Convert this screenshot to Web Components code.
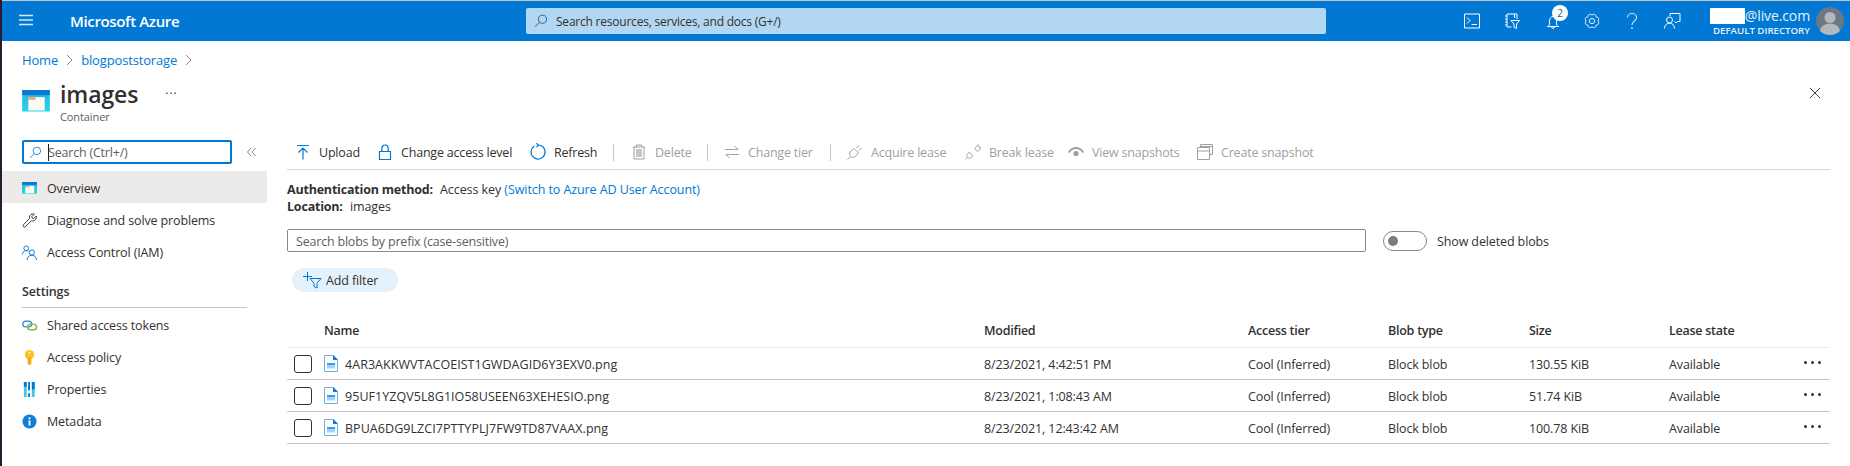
<!DOCTYPE html>
<html>
<head>
<meta charset="utf-8">
<title>images - Microsoft Azure</title>
<style>
  html, body { margin: 0; background: #fff; }
  body { font-family: "Open Sans", "Noto Sans", sans-serif; font-size: 12px; color: #323130; }
</style>
</head>
<body>
<az-portal></az-portal>
<script>
// every icon is drawn on a 16x16 box unless it says otherwise
const ICONS = {
  menu: `<path d="M0 1.5h14M0 6h14M0 10.5h14" stroke="currentColor" stroke-width="1.4" fill="none" opacity=".85"/>`,
  search: `<circle cx="9.7" cy="6" r="4.6" fill="none" stroke="currentColor"/><path d="M6.4 9.4L1.2 14.6" stroke="currentColor" fill="none"/>`,
  terminal: `<path d="M.5 1h15v14H.5z" fill="none" stroke="#fff"/><path d="M3 4.500l3 3-3 3M7.500 11.500h5.500" fill="none" stroke="#fff"/>`,
  directory: `<path d="M3 1h10v5M3 1v13h4.500" fill="none" stroke="#fff"/><path d="M1 3h2M1 6h2M1 9h2M1 12h2M10.500 1v4" fill="none" stroke="#fff" stroke-width="1.200"/><path d="M7 7.500h8.500l-3 3.500v4.500l-2.500-1.200V11z" fill="none" stroke="#fff"/>`,
  bell: `<path d="M3 13.500h12M4.500 13.500c1-1.500 1-3 1-5.500 0-2.500 1.500-4.500 3.500-4.500s3.500 2 3.500 4.500c0 2.500 0 4 1 5.500M7.500 14c0 1.800 3 1.800 3 0" fill="none" stroke="#fff"/>`,
  gear: `<path d="M13.800 8A2.300 2.300 0 0 1 12.100 12.100A2.300 2.300 0 0 1 8 13.800A2.300 2.300 0 0 1 3.900 12.100A2.300 2.300 0 0 1 2.200 8A2.300 2.300 0 0 1 3.900 3.900A2.300 2.300 0 0 1 8 2.200A2.300 2.300 0 0 1 12.100 3.900A2.300 2.300 0 0 1 13.800 8Z" fill="none" stroke="#e4f1fb"/><circle cx="8" cy="8" r="2.600" fill="none" stroke="#e4f1fb"/>`,
  help: `<path d="M3.500 4.500C3.500 2 5.800 .5 8 .5s4.500 1.500 4.500 4c0 3.500-4.500 3.700-4.500 7.500" fill="none" stroke="#d5e9f8" stroke-width="1.100"/><circle cx="8" cy="15" r=".9" fill="#d5e9f8"/>`,
  feedback: `<path d="M6 3V.5h10v8h-2.500L12 10l-1.500-1.500" fill="none" stroke="#fff"/><circle cx="5.500" cy="7" r="3" fill="none" stroke="#fff"/><path d="M.5 15.500c0-3 2-5.300 5-5.300s5 2.300 5 5.300" fill="none" stroke="#fff"/>`,
  close: `<path d="M1 1l12 12M13 1L1 13" stroke="#201f1e" fill="none"/>`,
  upload: `<path d="M2 1.500h12M8 15.500V4M3.500 8.500L8 4l4.500 4.500" fill="none" stroke="#0078d4" stroke-width="1.200"/>`,
  lock: `<path d="M2.500 7.500h11v8h-11zM4.800 7.500V4.500C4.800 2.500 6.200 1 8 1s3.200 1.500 3.200 3.500v3" fill="none" stroke="#0078d4" stroke-width="1.200"/>`,
  refresh: `<path d="M4.500 2A7 7 0 1 0 8 1M6.300 -.8L8.500 1L6.500 3.200" fill="none" stroke="#0078d4" stroke-width="1.200"/>`,
  trash: `<path d="M2 3h12M5.500 3V1h5v2M3 3v12h10V3" fill="none" stroke="#a19f9d"/><path d="M5 5h6v8H5z" fill="#c8c6c4"/>`,
  swap: `<path d="M1 5.500h13M10.500 2L14 5.500M15 10.500H2M5.500 14L2 10.500" fill="none" stroke="#a19f9d"/>`,
  acquire: `<path d="M.5 15.500l3-3" fill="none" stroke="#a19f9d"/><path d="M3.500 12.500c-1.500-1.500-1-4 .5-5.500l3-2.500 4.500 4.500L9 12c-1.500 1.500-4 2-5.500.5zM9.500 4L12 1.500M12 6.500L14.500 4" fill="none" stroke="#a19f9d"/>`,
  breaklease: `<path d="M.5 15.500l2-2" fill="none" stroke="#a19f9d"/><path d="M2.500 13.500c-1-1-.8-2.800.2-3.800l1.800-1.500 3.300 3.300L6.300 13.300c-1 1-2.800 1.200-3.800.2zM9.500 4.500l1.800-1.800c1-.9 2.500-.9 3.300-.1.800.8.800 2.300-.1 3.200L12.500 7.500zM12.500 1.500l1-1M15.500 3.500l-1 .5" fill="none" stroke="#a19f9d"/>`,
  eye: `<path d="M0 8c2-3.500 5-5 8-5s6 1.500 8 5l-1.500 1C13 6.500 10.500 5 8 5S3 6.500 1.500 9z" fill="#a19f9d"/><circle cx="8" cy="9.500" r="2.600" fill="#a19f9d"/>`,
  snapshot: `<path d="M3.500 3.500V.5h12v10h-3M.5 3.500h12v12H.5zM.5 7h12M3.500 2.500h12" fill="none" stroke="#a19f9d"/>`,
  container: `<defs><linearGradient id="c" x1="0" y1="0" x2="0" y2="1"><stop offset="0" stop-color="#1fb3e8"/><stop offset="1" stop-color="#2ad4e8"/></linearGradient></defs><rect width="27" height="21" fill="url(#c)"/><rect width="27" height="5" fill="#0a78d2"/><rect x="6" y="7" width="16" height="13" fill="#fdfaf2"/><rect x="6" y="7" width="7" height="2.500" fill="#f7a35c"/>`,
  wrench: `<path d="M1.500 12.500L8 6c-.6-2.200.6-4.400 3-5 .8-.2 1.500-.1 2.200.1L10.500 3.800l.4 1.700 1.700.4 2.600-2.700c.6 2.500-.8 4.700-3 5.200-.7.200-1.500.1-2.200-.2L3.500 14.800c-1.500 1-3.200-.8-2-2.300z" fill="#fff" stroke="#323130"/>`,
  iam: `<circle cx="4.500" cy="3.500" r="2.500" fill="none" stroke="#0078d4"/><path d="M.5 10c0-2.500 1.500-4 4-4 1 0 1.800.200 2.500.7" fill="none" stroke="#0078d4"/><circle cx="10.500" cy="8" r="2.800" fill="none" stroke="#0078d4"/><path d="M5.500 16c0-3 2-5 5-5s5 2 5 5" fill="none" stroke="#0078d4"/>`,
  tokens: `<rect x=".8" y="3.500" width="9.500" height="6" rx="3" fill="none" stroke="#3f8fdc" stroke-width="1.500"/><rect x="6" y="6.500" width="9.500" height="6" rx="3" fill="none" stroke="#7fba42" stroke-width="1.500"/>`,
  key: `<circle cx="8" cy="5" r="5" fill="#fcc21b"/><circle cx="8" cy="2.800" r="1.100" fill="#fff3c4"/><path d="M6 8h4v6.500L8 16.500l-2-2z" fill="#f6a81c"/>`,
  bars: `<rect x="2" y="0" width="3" height="16" fill="#3ec5e8"/><rect x="2" y="0" width="3" height="5" fill="#0078d4"/><rect x="6.500" y="0" width="2" height="16" fill="#0078d4"/><rect x="6.500" y="9" width="2" height="3" fill="#fff"/><rect x="10.500" y="0" width="3" height="16" fill="#3ec5e8"/><rect x="10.500" y="0" width="3" height="8" fill="#0078d4"/>`,
  info: `<circle cx="8" cy="8" r="7.500" fill="#0f7ed8"/><rect x="7" y="6.800" width="2" height="5.500" fill="#fff"/><circle cx="8" cy="4.600" r="1.200" fill="#fff"/>`,
  addfilter: `<path d="M0 4.500h9M4.500 0v9" fill="none" stroke="#0078d4"/><path d="M6.500 6.500h11l-4 4.800V16l-3-1.500v-3.200z" transform="translate(.5 0)" fill="none" stroke="#0078d4"/>`,
  file: `<path d="M.5 .5h9l4 4v12H.5z" fill="#fff" stroke="#66b3ee"/><path d="M9 0v5h5z" fill="#0f7dd4"/><path d="M3 8h8v2H3z" fill="#3f9be3"/><path d="M3 10h8v3.500H3z" fill="#a9d3f5"/>`
};

class AzIcon extends HTMLElement {
  constructor() {
    super();
    this.attachShadow({ mode: "open" });
  }

  connectedCallback() {
    const width = this.getAttribute("width") || 16;
    const height = this.getAttribute("height") || width;
    const box = this.getAttribute("box") || "0 0 16 16";
    this.shadowRoot.innerHTML = `
      <style>
        :host { display: inline-flex; flex: none; }
        svg { display: block; overflow: visible; }
      </style>
      <svg width="${width}" height="${height}" viewBox="${box}">${ICONS[this.getAttribute("name")] || ""}</svg>
    `;
  }
}
customElements.define("az-icon", AzIcon);

class AzTopbar extends HTMLElement {
  constructor() {
    super();
    this.attachShadow({ mode: "open" });
  }

  connectedCallback() {
    this.shadowRoot.innerHTML = `
      <style>
        :host { display: flex; align-items: center; height: 40px; background: #0078d4; color: #fff; border-top: 1px solid #c4c4c4; }
        :host > * { flex: none; }
        .menu { margin-left: 17px; width: 14px; color: #fff; position: relative; top: -1px; }
        .brand { margin-left: 37px; width: 456px; font-size: 15px; font-weight: 600; letter-spacing: -.35px; white-space: nowrap; }
        .search { width: 800px; height: 26px; box-sizing: border-box; padding-left: 8px; display: flex; align-items: center; gap: 8px; background: #b3d7f2; border-radius: 2px; color: #323130; font-size: 12px; letter-spacing: -.22px; }
        .search az-icon { color: #0b5a99; }
        .icons { margin-left: 126px; display: flex; align-items: center; }
        .slot { width: 40px; display: flex; justify-content: center; position: relative; }
        .badge { position: absolute; left: 20px; top: -8px; width: 16px; height: 16px; border-radius: 50%; background: #fff; color: #0f5fa8; font-size: 10px; line-height: 16px; text-align: center; }
        .account { width: 118px; padding-top: 1px; box-sizing: border-box; line-height: 1; display: flex; flex-direction: column; align-items: flex-end; }
        .mail { display: flex; align-items: center; font-size: 14px; letter-spacing: -.12px; color: #e4f1fb; }
        .mask { width: 35px; height: 16px; background: #fff; }
        .dir { margin-top: 2px; font-size: 9.700px; font-weight: 600; white-space: nowrap; letter-spacing: -.02px; color: #e4f1fb; }
        .avatar { margin-left: 6px; width: 28px; height: 28px; border-radius: 50%; background: #6b7886; overflow: hidden; }
        svg { display: block; }
      </style>
      <az-icon class="menu" name="menu" width="14" height="12" box="0 0 14 12"></az-icon>
      <div class="brand">Microsoft Azure</div>
      <div class="search"><az-icon name="search" width="14"></az-icon><span>Search resources, services, and docs (G+/)</span></div>
      <div class="icons">
        <div class="slot"><az-icon name="terminal"></az-icon></div>
        <div class="slot"><az-icon name="directory"></az-icon></div>
        <div class="slot"><az-icon name="bell"></az-icon><span class="badge">2</span></div>
        <div class="slot"><az-icon name="gear"></az-icon></div>
        <div class="slot"><az-icon name="help"></az-icon></div>
        <div class="slot"><az-icon name="feedback"></az-icon></div>
      </div>
      <div class="account">
        <div class="mail"><span class="mask"></span><span>@live.com</span></div>
        <div class="dir">DEFAULT DIRECTORY</div>
      </div>
      <div class="avatar">
        <svg width="28" height="28" viewBox="0 0 28 28"><circle cx="14" cy="10.500" r="5.500" fill="#b4b8bc"/><ellipse cx="14" cy="24" rx="10" ry="7.500" fill="#b4b8bc"/></svg>
      </div>
    `;
  }
}
customElements.define("az-topbar", AzTopbar);

class AzPageHead extends HTMLElement {
  constructor() {
    super();
    this.attachShadow({ mode: "open" });
  }

  connectedCallback() {
    this.shadowRoot.innerHTML = `
      <style>
        :host { display: block; height: 99px; box-sizing: border-box; padding: 0 29px 0 20px; }
        .crumbs { height: 38px; box-sizing: border-box; display: flex; align-items: center; color: #0078d4; font-size: 13px; letter-spacing: -.15px; }
        .crumbs svg { margin: 0 8px; }
        .row { display: flex; margin-top: 11px; }
        .names { margin-left: 10px; }
        h1 { margin: -10px 0 0; height: 28px; font-size: 23px; font-weight: 600; line-height: 28px; letter-spacing: -.1px; color: #323130; display: flex; }
        .more { margin-left: 27px; font-size: 12px; font-weight: 400; letter-spacing: 1px; line-height: 20px; }
        .kind { margin-top: 1px; color: #605e5c; font-size: 11px; letter-spacing: -.1px; }
        .close { margin-left: auto; margin-top: -3px; }
      </style>
      <div class="crumbs">
        <span>Home</span>
        <svg width="7" height="12" viewBox="0 0 7 12"><path d="M1 1l5 5-5 5" fill="none" stroke="#8a8886"/></svg>
        <span>blogpoststorage</span>
        <svg width="7" height="12" viewBox="0 0 7 12"><path d="M1 1l5 5-5 5" fill="none" stroke="#8a8886"/></svg>
      </div>
      <div class="row">
        <az-icon name="container" width="28" height="21.500" box="0 0 27 21"></az-icon>
        <div class="names">
          <h1><span>images</span><span class="more">...</span></h1>
          <div class="kind">Container</div>
        </div>
        <az-icon class="close" name="close" width="12" box="0 0 14 14"></az-icon>
      </div>
    `;
  }
}
customElements.define("az-page-head", AzPageHead);

class AzMenuItem extends HTMLElement {
  constructor() {
    super();
    this.attachShadow({ mode: "open" });
  }

  connectedCallback() {
    const name = this.getAttribute("icon");
    const size = name === "container" ? `width="15" height="11.700" box="0 0 27 21"` : `width="15"`;
    this.shadowRoot.innerHTML = `
      <style>
        :host { display: flex; align-items: center; height: 32px; box-sizing: border-box; padding: 2px 0 0 20px; gap: 10px; }
        :host([selected]) { background: #edebe9; }
      </style>
      <az-icon name="${name}" ${size}></az-icon>
      <slot></slot>
    `;
  }
}
customElements.define("az-menu-item", AzMenuItem);

class AzSidebar extends HTMLElement {
  constructor() {
    super();
    this.attachShadow({ mode: "open" });
  }

  connectedCallback() {
    this.shadowRoot.innerHTML = `
      <style>
        :host { display: block; width: 265px; flex: none; font-size: 12.500px; letter-spacing: -.13px; }
        .top { display: flex; align-items: center; padding-left: 20px; height: 31px; padding-bottom: 7px; box-sizing: border-box; }
        .box { width: 210px; height: 24px; box-sizing: border-box; border: 2px solid #0078d4; border-radius: 2px; display: flex; align-items: center; padding-left: 5px; color: #605e5c; letter-spacing: -.2px; }
        .box az-icon { color: #0078d4; margin-right: 6px; }
        .caret { width: 1px; height: 17px; background: #201f1e; margin-right: -1px; }
        .fold { margin-left: 15px; }
        .heading { height: 41px; margin: 0 20px; padding-top: 17px; box-sizing: border-box; border-bottom: 1px solid #c8c6c4; font-weight: 600; width: 225px; line-height: 16px; }
      </style>
      <div class="top">
        <div class="box"><az-icon name="search" width="13"></az-icon><span class="caret"></span><span>Search (Ctrl+/)</span></div>
        <svg class="fold" width="9" height="8" viewBox="0 0 9 8"><path d="M4 0L0.500 4 4 8M8.500 0L5 4l3.500 4" fill="none" stroke="#8a8886"/></svg>
      </div>
      <az-menu-item icon="container" selected>Overview</az-menu-item>
      <az-menu-item icon="wrench">Diagnose and solve problems</az-menu-item>
      <az-menu-item icon="iam">Access Control (IAM)</az-menu-item>
      <div class="heading">Settings</div>
      <az-menu-item icon="tokens">Shared access tokens</az-menu-item>
      <az-menu-item icon="key">Access policy</az-menu-item>
      <az-menu-item icon="bars">Properties</az-menu-item>
      <az-menu-item icon="info">Metadata</az-menu-item>
    `;
  }
}
customElements.define("az-sidebar", AzSidebar);

class AzToolButton extends HTMLElement {
  constructor() {
    super();
    this.attachShadow({ mode: "open" });
  }

  connectedCallback() {
    this.shadowRoot.innerHTML = `
      <style>
        :host { display: flex; align-items: center; gap: 8px; flex: none; width: ${this.getAttribute("size")}px; white-space: nowrap; }
        :host([disabled]) { color: #a19f9d; }
      </style>
      <az-icon name="${this.getAttribute("icon")}"></az-icon>
      <slot></slot>
    `;
  }
}
customElements.define("az-tool-button", AzToolButton);

class AzToolbar extends HTMLElement {
  constructor() {
    super();
    this.attachShadow({ mode: "open" });
  }

  connectedCallback() {
    this.shadowRoot.innerHTML = `
      <style>
        :host { display: flex; align-items: center; padding: 1px 0 6px 8px; height: 22px; border-bottom: 1px solid #d9d7d5; letter-spacing: -.2px; font-size: 12.500px; }
        .sep { flex: none; width: 17px; height: 17px; box-sizing: border-box; border-left: 1px solid #c8c6c4; }
      </style>
      <az-tool-button icon="upload" size="82">Upload</az-tool-button>
      <az-tool-button icon="lock" size="153">Change access level</az-tool-button>
      <az-tool-button icon="refresh" size="83">Refresh</az-tool-button>
      <span class="sep" style="width:18px"></span>
      <az-tool-button icon="trash" size="76" disabled>Delete</az-tool-button>
      <span class="sep"></span>
      <az-tool-button icon="swap" size="106" disabled>Change tier</az-tool-button>
      <span class="sep"></span>
      <az-tool-button icon="acquire" size="118" disabled>Acquire lease</az-tool-button>
      <az-tool-button icon="breaklease" size="103" disabled>Break lease</az-tool-button>
      <az-tool-button icon="eye" size="129" disabled>View snapshots</az-tool-button>
      <az-tool-button icon="snapshot" size="120" disabled>Create snapshot</az-tool-button>
    `;
  }
}
customElements.define("az-toolbar", AzToolbar);

class AzFilterBar extends HTMLElement {
  constructor() {
    super();
    this.attachShadow({ mode: "open" });
  }

  connectedCallback() {
    this.shadowRoot.innerHTML = `
      <style>
        :host { display: block; font-size: 12.500px; letter-spacing: -.08px; }
        .auth { padding-top: 11px; line-height: 17px; }
        b { font-weight: 700; margin-right: 4px; letter-spacing: -.2px; }
        a { color: #0078d4; text-decoration: none; }
        .search { display: flex; align-items: center; margin-top: 14px; height: 23px; }
        .input { width: 1079px; height: 23px; box-sizing: border-box; border: 1px solid #8a8886; border-radius: 2px; padding-left: 8px; line-height: 23px; color: #605e5c; letter-spacing: -.2px; }
        .toggle { margin-left: 17px; width: 44px; height: 20px; box-sizing: border-box; border: 1px solid #8a8886; border-radius: 10px; display: flex; align-items: center; padding-left: 4px; }
        .toggle i { width: 10px; height: 10px; border-radius: 50%; background: #7f7d7b; }
        .label { margin-left: 10px; padding-top: 2px; letter-spacing: -.12px; }
        .pill { margin: 16px 0 0 5px; width: 106px; height: 24px; box-sizing: border-box; border-radius: 12px; background: #e5f1fa; display: flex; align-items: center; gap: 5px; padding-left: 11px; letter-spacing: -.13px; }
      </style>
      <div class="auth">
        <div><b>Authentication method:</b> Access key <a>(Switch to Azure AD User Account)</a></div>
        <div><b>Location:</b> images</div>
      </div>
      <div class="search">
        <div class="input">Search blobs by prefix (case-sensitive)</div>
        <div class="toggle"><i></i></div>
        <div class="label">Show deleted blobs</div>
      </div>
      <div class="pill"><az-icon name="addfilter" width="18" height="16" box="0 0 18 16"></az-icon><span>Add filter</span></div>
    `;
  }
}
customElements.define("az-filter-bar", AzFilterBar);

class BlobRow extends HTMLElement {
  constructor() {
    super();
    this.attachShadow({ mode: "open" });
  }

  connectedCallback() {
    const cells = ["modified", "tier", "type", "size", "lease"]
      .map((key) => `<div class="cell">${this.getAttribute(key)}</div>`)
      .join("");
    this.shadowRoot.innerHTML = `
      <style>
        :host { display: grid; grid-template-columns: 37px 660px 264px 140px 141px 140px 81px 1fr; align-items: center; height: 32px; box-sizing: border-box; border-bottom: 1px solid #c8c6c4; white-space: nowrap; letter-spacing: -.12px; }
        .check { width: 18px; height: 18px; margin-left: 7px; box-sizing: border-box; border: 1px solid #323130; border-radius: 3px; }
        .cell { margin-top: 2px; }
        .name { display: flex; align-items: center; gap: 7px; letter-spacing: .05px; }
        .name span { margin-top: 2px; }
        .more { display: flex; justify-content: flex-end; gap: 4px; padding-right: 9px; margin-top: -3px; }
        .more i { width: 3px; height: 3px; border-radius: 50%; background: #323130; }
      </style>
      <div class="check"></div>
      <div class="name"><az-icon name="file" width="14" height="17" box="0 0 14 17"></az-icon><span>${this.getAttribute("name")}</span></div>
      ${cells}
      <div class="more"><i></i><i></i><i></i></div>
    `;
  }
}
customElements.define("blob-row", BlobRow);

class BlobTable extends HTMLElement {
  constructor() {
    super();
    this.attachShadow({ mode: "open" });
  }

  connectedCallback() {
    this.shadowRoot.innerHTML = `
      <style>
        :host { display: block; margin-top: 21px; font-size: 12.500px; letter-spacing: -.25px; }
        .head { display: grid; grid-template-columns: 37px 660px 264px 140px 141px 140px 1fr; align-items: center; height: 35px; box-sizing: border-box; border-bottom: 1px solid #edebe9; font-weight: 600; }
      </style>
      <div class="head"><span></span><div>Name</div><div>Modified</div><div>Access tier</div><div>Blob type</div><div>Size</div><div>Lease state</div></div>
      <slot></slot>
    `;
  }
}
customElements.define("blob-table", BlobTable);

class AzPortal extends HTMLElement {
  constructor() {
    super();
    this.attachShadow({ mode: "open" });
  }

  connectedCallback() {
    this.shadowRoot.innerHTML = `
      <style>
        :host { display: block; height: 466px; box-sizing: border-box; border-left: 2px solid #2b1b2f; overflow: hidden; }
        .body { display: flex; }
        main { flex: 1; min-width: 0; padding: 0 20px; }
      </style>
      <az-topbar></az-topbar>
      <az-page-head></az-page-head>
      <div class="body">
        <az-sidebar></az-sidebar>
        <main>
          <az-toolbar></az-toolbar>
          <az-filter-bar></az-filter-bar>
          <blob-table>
            <blob-row name="4AR3AKKWVTACOEIST1GWDAGID6Y3EXV0.png" modified="8/23/2021, 4:42:51 PM" tier="Cool (Inferred)" type="Block blob" size="130.55 KiB" lease="Available"></blob-row>
            <blob-row name="95UF1YZQV5L8G1IO58USEEN63XEHESIO.png" modified="8/23/2021, 1:08:43 AM" tier="Cool (Inferred)" type="Block blob" size="51.74 KiB" lease="Available"></blob-row>
            <blob-row name="BPUA6DG9LZCI7PTTYPLJ7FW9TD87VAAX.png" modified="8/23/2021, 12:43:42 AM" tier="Cool (Inferred)" type="Block blob" size="100.78 KiB" lease="Available"></blob-row>
          </blob-table>
        </main>
      </div>
    `;
  }
}
customElements.define("az-portal", AzPortal);
</script>
</body>
</html>
